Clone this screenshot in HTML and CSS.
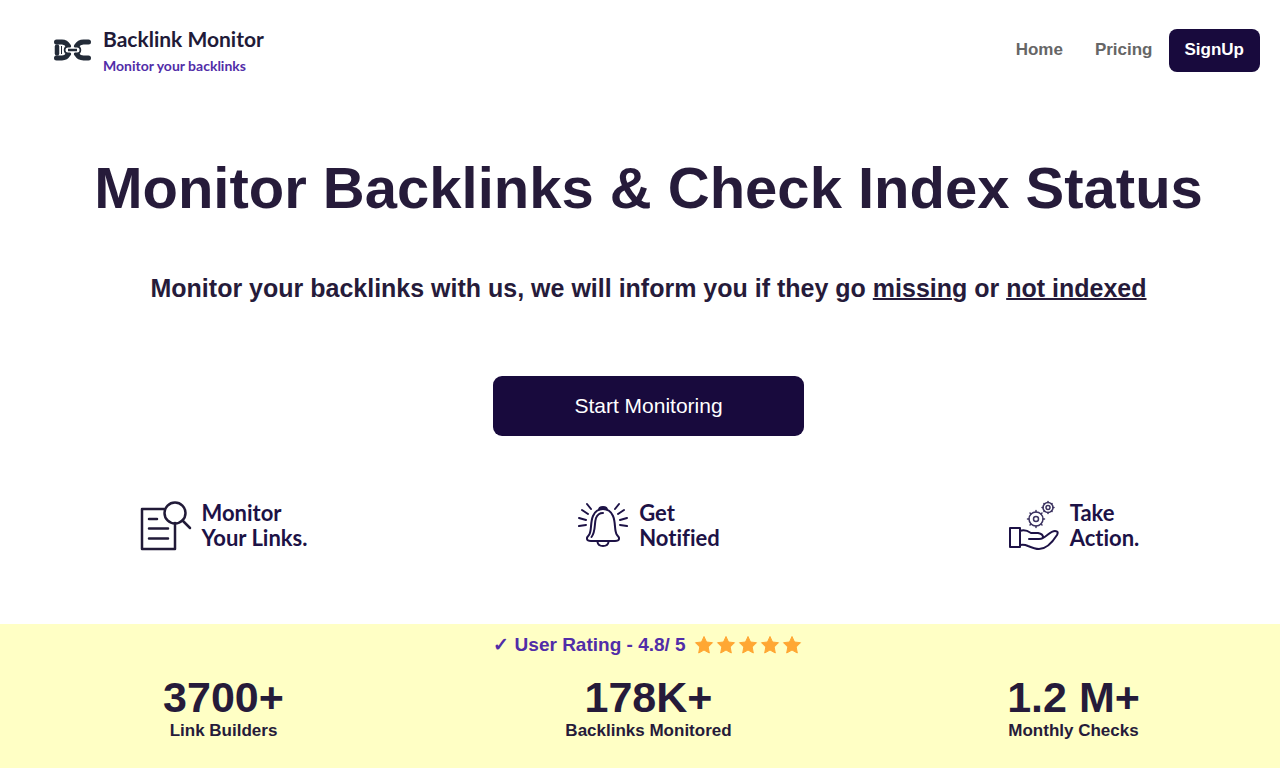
FILE: index.html
```html
<!DOCTYPE html>
<html lang="en">
<head>
<meta charset="utf-8">
<meta name="viewport" content="width=device-width, initial-scale=1">
<title>Backlink Monitor</title>
<link rel="stylesheet" href="styles.css">
</head>
<body>
<header class="header">
  <a class="brand" href="#">
    <svg class="brand-icon" viewBox="0 0 38 24" fill="none" stroke="#232b38" aria-hidden="true">
      <path d="M3.500 4H9Q13 4 15.500 8M3.500 20H9Q13 20 15.500 16" stroke-width="5" stroke-linecap="round"/>
      <path d="M4 8.500V15.500" stroke-width="4.500" stroke-linecap="round"/>
      <path d="M8.500 8V16" stroke-width="1"/>
      <path d="M35.500 4H30.500Q26 4 23.500 8M35.500 20H30.500Q26 20 23.500 16" stroke-width="5" stroke-linecap="round"/>
      <path d="M17 8H15.500Q12 9 12 12T15.500 16H17M22 8H23.500Q27 9 27 12T23.500 16H22" stroke-width="2.500"/>
      <path d="M15 12H24" stroke="#fff" stroke-width="5" stroke-linecap="round"/>
      <path d="M15 12H24" stroke-width="2.500"/>
    </svg>
    <span class="brand-text">
      <span class="brand-name">Backlink Monitor</span>
      <span class="brand-tag">Monitor your backlinks</span>
    </span>
  </a>
  <nav class="nav">
    <a class="nav-link" href="#">Home</a>
    <a class="nav-link" href="#">Pricing</a>
    <a class="nav-link nav-signup" href="#">SignUp</a>
  </nav>
</header>
<main>
  <section class="hero">
    <h1 class="title">Monitor Backlinks &amp; Check Index Status</h1>
    <h2 class="subtitle">Monitor your backlinks with us, we will inform you if they go <u>missing</u> or <u>not indexed</u></h2>
    <button class="start" type="button">Start Monitoring</button>
    <ul class="columns features">
      <li class="feature">
        <svg class="feature-icon" viewBox="0 0 52 52" fill="none" stroke="#211a38" stroke-width="2.500" stroke-linecap="round" stroke-linejoin="round" aria-hidden="true">
          <path d="M24 9H2V49H35V23M9 19H17M9 28.500H28M9 38.500H28"/>
          <circle cx="35" cy="13" r="10.500"/>
          <path d="M42.500 20.500L50 28"/>
        </svg>
        <span class="feature-text">Monitor<br>Your Links.</span>
      </li>
      <li class="feature">
        <svg class="feature-icon" viewBox="0 0 52 52" fill="none" stroke="#1d1246" stroke-width="2" stroke-linecap="round" stroke-linejoin="round" aria-hidden="true">
          <path d="M22 10Q22 7 26 7T30 10M14 41C9 41 9 38 12 35C15 31 13 23 16 16Q19 9 26 9T36 16C39 23 37 31 40 35C43 38 43 41 38 41Z"/>
          <path d="M14.500 37C19 31 17 24 19 18Q21 13 26 13M20.500 42Q21 46 26 46T31.500 42"/>
          <path d="M10 4L14 9M5 10L11 14M2 18L9 20M2 26L9 25M42 4L38 9M47 10L41 14M50 18L43 20M50 26L43 25"/>
        </svg>
        <span class="feature-text">Get<br>Notified</span>
      </li>
      <li class="feature">
        <svg class="feature-icon" viewBox="0 0 52 52" fill="none" stroke="#1d1246" stroke-width="2" stroke-linecap="round" stroke-linejoin="round" aria-hidden="true">
          <path d="M2 28H12V47H2ZM12 31Q17 29 23 33H30Q35 34 35 37Q35 39 31 39H21M35 38C40 35 43 31 47 31Q51 31 49 35C44 43 38 49 31 49Q27 49 20 46Q16 44 12 45"/>
          <g stroke-width="1.500" stroke="#3c3360">
            <circle cx="28" cy="19" r="7"/><circle cx="28" cy="19" r="2.500"/>
            <path d="M28 12V10.500M28 26V27.500M21 19H19.500M35 19H36.500M23 14L22 13M33 14L34 13M23 24L22 25M33 24L34 25"/>
            <circle cx="40" cy="7.500" r="5"/><circle cx="40" cy="7.500" r="2"/>
            <path d="M40 2.500V1.500M40 12.500V13.500M35 7.500H34M45 7.500H46M36.500 4L36 3.500M43.500 4L44 3.500M36.500 11L36 11.500M43.500 11L44 11.500"/>
          </g>
        </svg>
        <span class="feature-text">Take<br>Action.</span>
      </li>
    </ul>
  </section>
  <section class="stats">
    <p class="rating">
      <span>✓ User Rating - 4.8/ 5</span>
      <svg class="stars" viewBox="0 0 110 20" fill="#ffa733" stroke="#ffa733" stroke-linejoin="round" role="img" aria-label="Five stars">
        <defs><path id="star" d="M10 1.500L12.500 7L18.500 7.700L14.200 12L15.300 18L10 15L4.700 18L5.800 12L1.500 7.700L7.500 7Z"/></defs>
        <use href="#star"/><use href="#star" x="22"/><use href="#star" x="44"/><use href="#star" x="66"/><use href="#star" x="88"/>
      </svg>
    </p>
    <dl class="columns">
      <div class="stat"><dt class="stat-label">Link Builders</dt><dd class="stat-value">3700+</dd></div>
      <div class="stat"><dt class="stat-label">Backlinks Monitored</dt><dd class="stat-value">178K+</dd></div>
      <div class="stat"><dt class="stat-label">Monthly Checks</dt><dd class="stat-value">1.2 M+</dd></div>
    </dl>
  </section>
</main>
</body>
</html>
```
FILE: styles.css
```css
* { box-sizing: border-box; }
body {
  margin: 0;
  min-height: 100vh;
  display: flex;
  flex-direction: column;
  background: #fff;
  color: #261b3a;
  font-family: "Liberation Sans", Arial, sans-serif;
}
main { flex: 1; display: flex; flex-direction: column; }
.header {
  display: flex;
  align-items: center;
  justify-content: space-between;
  padding: 23px 20px 24px 53px;
}
.brand { display: flex; align-items: center; gap: 12px; text-decoration: none; font-family: Lato, sans-serif; font-weight: 700; }
.brand-icon { width: 38px; height: 24px; }
.brand-text { display: flex; flex-direction: column; }
.brand-name { font-size: 21px; line-height: 32px; color: #211a38; }
.brand-tag { font-size: 14px; line-height: 22px; color: #512da8; }
.nav { display: flex; align-items: center; }
.nav-link { padding: 11px 16px 13px; font-size: 17px; line-height: 19px; font-weight: 700; color: #666; text-decoration: none; }
.nav-signup { border-radius: 8px; background: #180a3d; color: #fff; }
.hero { display: flex; flex-direction: column; align-items: center; padding: 54px 0 72px 17px; text-align: center; }
.title { margin: 0; font-size: 58px; line-height: 66px; }
.subtitle { margin: 51px 0 0; font-size: 25px; line-height: 32px; }
.subtitle u { text-decoration-thickness: 2px; }
.start {
  margin: 72px 0 0;
  padding: 18px 81px;
  border: 0;
  border-radius: 9px;
  background: #180a3d;
  color: #fff;
  font: 21px/24px "Liberation Sans", Arial, sans-serif;
}
.columns { align-self: stretch; display: grid; grid-template-columns: repeat(3, 1fr); gap: 12px; margin: 0; padding: 0; list-style: none; }
.features { margin-top: 64px; }
.feature { display: flex; align-items: center; justify-content: center; gap: 10px; }
.feature-icon { width: 52px; height: 52px; }
.feature-text { padding-bottom: 2px; font: 700 22px/25px Lato, sans-serif; font-variant-ligatures: none; color: #1d1246; text-align: left; }
.stats { flex: 1; padding: 8px 0 24px 17px; background: #ffffc5; }
.rating { display: flex; align-items: center; justify-content: center; gap: 8px; margin: 0 0 15px; font-size: 19px; line-height: 26px; font-weight: 700; color: #512da8; }
.stars { width: 110px; height: 20px; }
.stat { display: flex; flex-direction: column-reverse; align-items: center; font-weight: 700; }
.stat-value { margin: 0; font-size: 43px; line-height: 48px; }
.stat-label { font-size: 17px; line-height: 20px; }
```
